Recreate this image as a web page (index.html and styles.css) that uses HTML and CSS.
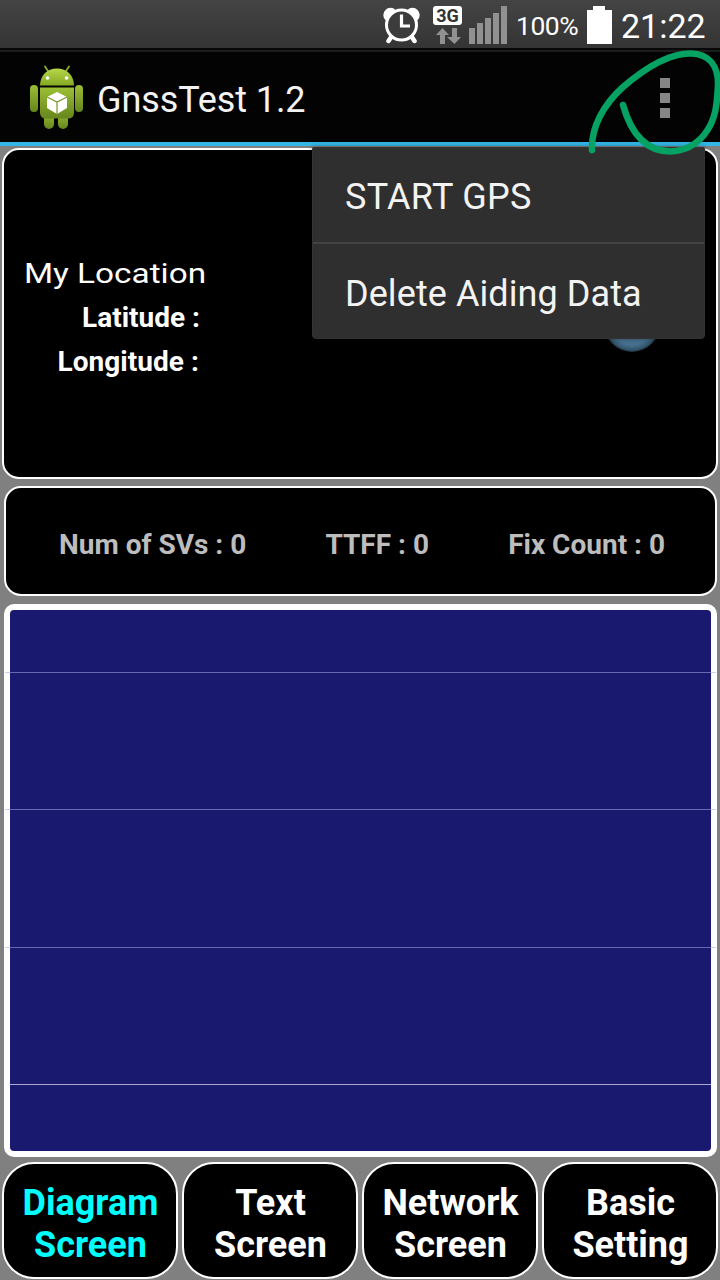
FILE: index.html
```html
<!DOCTYPE html>
<html lang="en">
<head>
  <meta charset="UTF-8">
  <meta name="viewport" content="width=device-width, initial-scale=1.0">
  <title>GnssTest 1.2</title>
  <link rel="stylesheet" href="styles.css">
</head>
<body>

<div class="status-bar">
  <svg class="alarm" width="38" height="38" viewBox="0 0 38 38">
    <circle cx="7.500" cy="9" r="7.200" fill="#fff"/>
    <circle cx="29.500" cy="9" r="7.200" fill="#fff"/>
    <path d="M8.500 30.500l-3 4.500M28.500 30.500l3 4.500" stroke="#fff" stroke-width="4.500" stroke-linecap="round"/>
    <circle cx="18.500" cy="19" r="15" fill="#3c3c3c" stroke="#fff" stroke-width="3"/>
    <path d="M18.500 8.500v11.500h8.500" fill="none" stroke="#fff" stroke-width="3.200"/>
  </svg>
  <div class="network">
    <span class="network-type">3G</span>
    <svg width="26" height="16" viewBox="0 0 26 16">
      <path d="M7.500 0l6.500 7h-4v9H5V7H1zM19.500 16L12 9h5V0h5v9h4z" fill="#919191"/>
    </svg>
  </div>
  <svg class="signal" width="38" height="38" viewBox="0 0 38 38">
    <path d="M0 22h6v16H0zM8 17h6v21H8zM16 12h6v26h-6zM24 7h6v31h-6zM32 0h6v38h-6z" fill="#919191"/>
  </svg>
  <span class="percent">100%</span>
  <svg class="battery" width="25" height="38" viewBox="0 0 25 38">
    <path d="M6 0h12v4h7v34H0V4h6z" fill="#fff"/>
  </svg>
  <span class="clock">21:22</span>
</div>

<div class="action-bar">
  <svg class="app-icon" width="56" height="66" viewBox="0 0 56 66">
    <defs>
      <linearGradient id="head" x1="0" y1="0" x2="0" y2="1">
        <stop offset="0" stop-color="#b7d74b"/>
        <stop offset="1" stop-color="#85a922"/>
      </linearGradient>
      <linearGradient id="body" x1="0" y1="0" x2="0" y2="1">
        <stop offset="0" stop-color="#9cbf35"/>
        <stop offset="1" stop-color="#66851c"/>
      </linearGradient>
    </defs>
    <path d="M19 6l-3-4.500M37 6l3-4.500" stroke="#8aad2c" stroke-width="1.800" stroke-linecap="round"/>
    <rect x="15" y="46" width="10" height="18" rx="5" fill="url(#body)"/>
    <rect x="29" y="46" width="10" height="18" rx="5" fill="url(#body)"/>
    <rect x="1" y="20" width="8" height="27" rx="4" fill="url(#body)"/>
    <rect x="46" y="20" width="8" height="27" rx="4" fill="url(#body)"/>
    <path d="M11 20.500c0-10 7-17 17-17s17 7 17 17z" fill="url(#head)"/>
    <path d="M11 22.500h34v25q0 6-6 6H17q-6 0-6-6z" fill="url(#body)"/>
    <circle cx="18.500" cy="13" r="1.800" fill="#fff"/>
    <circle cx="37.500" cy="13" r="1.800" fill="#fff"/>
    <path d="M28 27l10 5v11l-10 6-10-6V32z" fill="#fff"/>
    <path d="M18 32l10 5 10-5M28 37v12" fill="none" stroke="#77962c" stroke-width="1.200"/>
  </svg>
  <h1 class="title">GnssTest 1.2</h1>
  <div class="overflow">
    <i></i><i></i><i></i>
  </div>
</div>

<div class="content">
  <div class="panel location">
    <p class="location-title">My Location</p>
    <p class="latitude">Latitude :</p>
    <p class="longitude">Longitude :</p>
    <div class="globe"></div>
  </div>

  <div class="panel summary">
    <span>Num of SVs : 0</span>
    <span>TTFF : 0</span>
    <span>Fix Count : 0</span>
  </div>

  <div class="chart">
    <div class="grid-line"></div>
    <div class="grid-line"></div>
    <div class="grid-line"></div>
    <div class="grid-line axis"></div>
  </div>

  <div class="tabs">
    <button class="tab active">Diagram<br>Screen</button>
    <button class="tab">Text<br>Screen</button>
    <button class="tab">Network<br>Screen</button>
    <button class="tab">Basic<br>Setting</button>
  </div>
</div>

<div class="menu">
  <div class="menu-item"><span class="start">START GPS</span></div>
  <div class="menu-item"><span class="delete">Delete Aiding Data</span></div>
</div>

<!-- hand-drawn circle around the menu button -->
<svg class="marker" width="140" height="120" viewBox="580 40 140 120">
  <path d="M592 150C591 128 603 105 623 87C644 69 669 53 691 53.500C710 54 718 67 718 84C717 105 716 120 704 135C695 146 683 151 670 151.500C644 151 630 130 623 105" fill="none" stroke="#05a263" stroke-width="6.500" stroke-linecap="round" stroke-linejoin="round"/>
</svg>

</body>
</html>
```
FILE: styles.css
```css
* {
  box-sizing: border-box;
}

body {
  margin: 0;
  width: 720px;
  height: 1280px;
  display: flex;
  flex-direction: column;
  position: relative;
  overflow: hidden;
  background: #808080;
  color: #fff;
  font-family: Roboto, "Liberation Sans", sans-serif;
}

p, h1 {
  margin: 0;
}

/* status bar */
.status-bar {
  height: 50px;
  display: flex;
  align-items: flex-start;
  padding: 6px 0 0 383px;
  background: linear-gradient(#444, #343434);
  border-bottom: 2px solid #080808;
}

.network {
  width: 29px;
  margin-left: 12px;
  display: flex;
  flex-direction: column;
  align-items: center;
  gap: 3px;
}

.network-type {
  width: 29px;
  height: 19px;
  border-radius: 3px;
  background: #fff;
  color: #333;
  font-size: 18px;
  line-height: 19px;
  font-weight: bold;
  text-align: center;
}

.signal {
  margin-left: 7px;
}

.percent {
  width: 61px;
  margin-left: 9px;
  font-size: 26.5px;
  line-height: 40px;
  letter-spacing: -0.5px;
  white-space: nowrap;
}

.battery {
  margin-left: 10px;
}

.clock {
  margin-left: 9px;
  font-size: 34px;
  line-height: 40px;
}

/* action bar */
.action-bar {
  height: 96px;
  display: flex;
  align-items: center;
  padding: 2px 50px 0 29px;
  background: #030303;
  border-top: 2px solid #1d1d1d;
  border-bottom: 4px solid #33b5e5;
}

.title {
  margin-left: 12px;
  padding-top: 4px;
  font-size: 36px;
  font-weight: normal;
  letter-spacing: -0.1px;
  color: #f3f3f3;
}

.overflow {
  margin-left: auto;
  display: flex;
  flex-direction: column;
  gap: 5px;
}

.overflow i {
  width: 10px;
  height: 10px;
  background: #868686;
}

/* main content */
.content {
  flex: 1;
  display: flex;
  flex-direction: column;
  padding: 2px 2px 1px;
}

.panel {
  background: #000;
  border: 2px solid #fff;
  border-radius: 17px;
}

.location {
  height: 331px;
  position: relative;
  padding: 102px 20px 0;
  font-size: 28px;
  line-height: 44px;
  font-weight: bold;
}

.location-title {
  width: max-content;
  font-weight: normal;
  transform: scaleX(1.19);
  transform-origin: left;
}

.latitude, .longitude {
  width: 176px;
  text-align: right;
}

.longitude {
  width: 175px;
  letter-spacing: 0.05px;
}

.globe {
  position: absolute;
  left: 600px;
  top: 146px;
  width: 56px;
  height: 56px;
  border-radius: 50%;
  background: radial-gradient(closest-side, #47718f 75%, #34566c 92%, #1c2f3c);
}

.summary {
  height: 110px;
  margin: 7px 1px 0 2px;
  display: flex;
  align-items: center;
  justify-content: space-between;
  padding: 7px 50px 0 53px;
  color: #bdbdbd;
  font-size: 28px;
  font-weight: bold;
}

.chart {
  height: 553px;
  margin: 7.5px 1px 0 2px;
  background: #191970;
  border: 6px solid #fff;
  border-radius: 10px;
}

.grid-line {
  height: 137.5px;
  margin: 0 -5px;
  border-bottom: 1px solid rgba(170, 170, 225, 0.55);
}

.grid-line:first-child {
  height: 63px;
}

.grid-line.axis {
  height: 137px;
  margin: 0;
  border-color: #aaaacc;
}

/* bottom tabs */
.tabs {
  margin-top: auto;
  display: grid;
  grid-template-columns: repeat(4, 1fr);
  gap: 4px;
}

.tab {
  height: 117px;
  padding: 6px 0 0 1px;
  border: 2px solid #fff;
  border-radius: 32px;
  background: #000;
  color: #fff;
  font-family: inherit;
  font-size: 36px;
  line-height: 42px;
  font-weight: bold;
}

.tab.active {
  color: #0ff;
}

/* dropdown menu */
.menu {
  position: absolute;
  left: 312px;
  top: 147px;
  width: 393px;
  height: 192px;
  display: flex;
  flex-direction: column;
  background: #2f2f2f;
  border: 1px solid #343434;
  border-radius: 2px 2px 4px 4px;
  box-shadow: 0 0 5px rgba(0, 0, 0, 0.4);
}

.menu-item {
  height: 94px;
  display: flex;
  align-items: center;
  padding: 3px 0 0 32px;
  font-size: 36px;
  color: #f3f3f3;
}

.menu-item + .menu-item {
  height: 96px;
  padding-top: 5px;
  border-top: 2px solid #434343;
}

.start {
  letter-spacing: 0.3px;
}

.delete {
  letter-spacing: 0.08px;
}

.marker {
  position: absolute;
  left: 580px;
  top: 40px;
}
```
